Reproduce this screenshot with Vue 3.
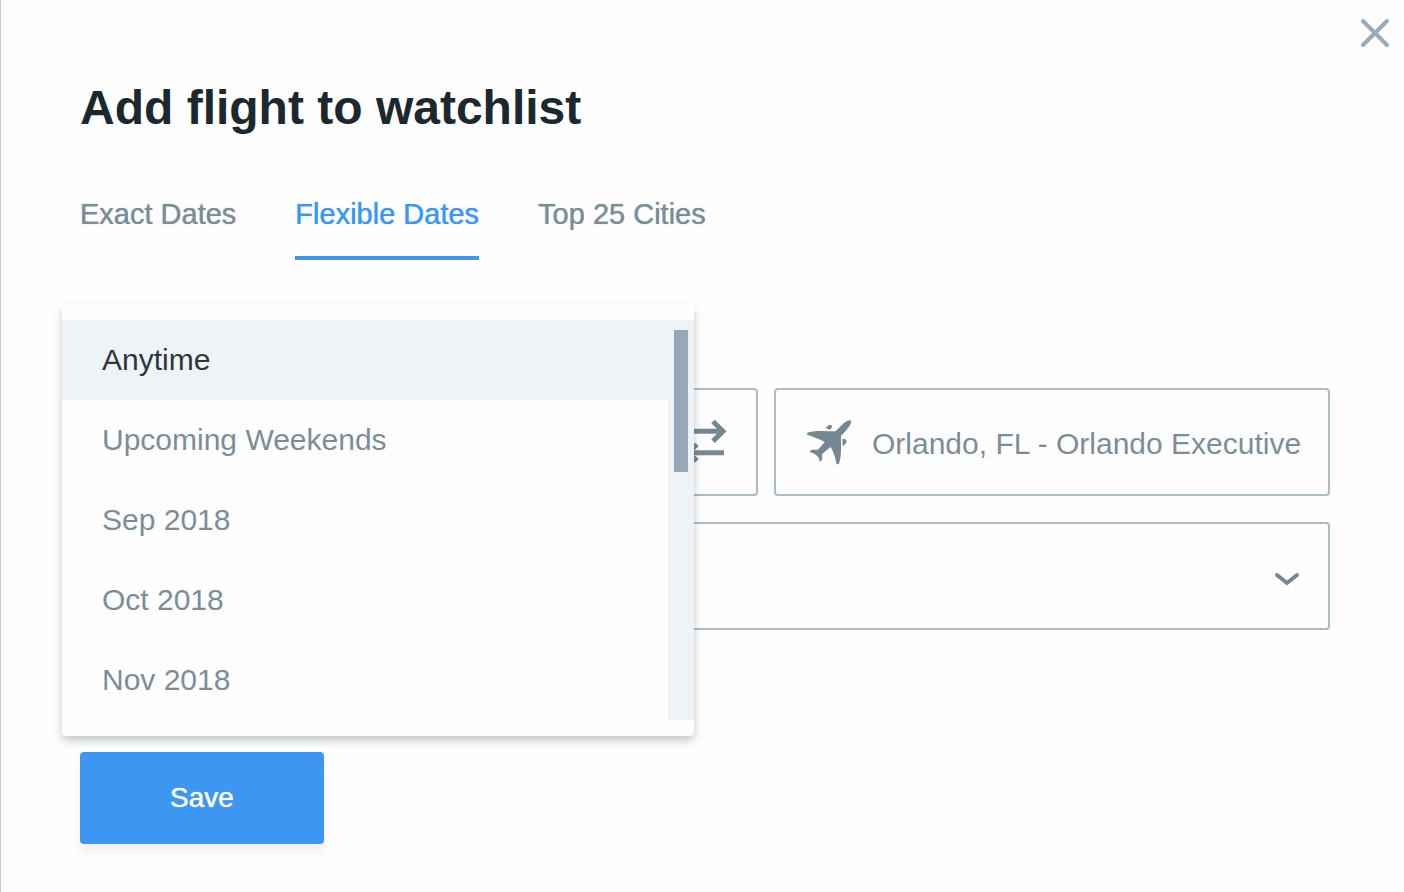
<script setup>
import { ref } from 'vue'

const tabs = ['Exact Dates', 'Flexible Dates', 'Top 25 Cities']
const activeTab = ref('Flexible Dates')

const periods = ['Anytime', 'Upcoming Weekends', 'Sep 2018', 'Oct 2018', 'Nov 2018']
const period = ref('Anytime')

const origin = ref('')
const destination = ref('Orlando, FL - Orlando Executive')

function swap() {
  const previous = origin.value
  origin.value = destination.value
  destination.value = previous
}
</script>

<template>
  <main class="dialog" role="dialog" aria-labelledby="dialog-title">
    <button class="close" type="button" aria-label="Close">
      <svg viewBox="0 0 30 30" aria-hidden="true"><path d="M3 3 27 27M27 3 3 27" /></svg>
    </button>

    <h1 id="dialog-title" class="title">Add flight to watchlist</h1>

    <nav class="tabs" role="tablist">
      <button
        v-for="tab in tabs"
        :key="tab"
        type="button"
        role="tab"
        class="tab"
        :class="{ active: tab === activeTab }"
        :aria-selected="tab === activeTab"
        @click="activeTab = tab"
      >{{ tab }}</button>
    </nav>

    <form class="form" @submit.prevent>
      <div class="route">
        <label class="field">
          <input v-model="origin" type="text" aria-label="From" />
        </label>
        <button class="swap" type="button" aria-label="Swap cities" @click="swap">
          <svg viewBox="0 0 46 48" aria-hidden="true">
            <path d="M3 13.3H40M5 34.7H42" />
            <path d="M31 3.5 41 13.3 31 23.1M15 26.5 6 34.7 15 42.9" />
          </svg>
        </button>
        <label class="field">
          <svg class="plane" viewBox="496 385 138 138" aria-hidden="true">
            <path d="M630 389Q633 391 630 399C626 409 614 422 601 435L601 480C601 497 598 510 594 520Q590 523 587 518C585 503 580 486 570 469Q556 479 544 491L545 502Q544 512 538 513Q535 500 529 495Q520 487 507 484Q508 477 516 477L531 477Q542 467 552 454C538 444 520 440 500 432Q496 427 504 425C525 419 555 421 585 422C600 406 610 396 618 392Q626 387 630 389Z" />
            <path d="M555 412Q560 403 569 402Q576 404 573 412L567 417ZM605 446L611 444Q618 446 618 452Q616 461 606 467Z" />
          </svg>
          <input v-model="destination" type="text" aria-label="To" />
        </label>
      </div>

      <div class="period">
        <select v-model="period" aria-label="Travel period">
          <option v-for="p in periods" :key="p" :value="p">{{ p }}</option>
        </select>
        <svg class="chevron" viewBox="0 0 26 16" aria-hidden="true"><path d="M3 4 13 12 23 4" /></svg>
      </div>

      <div class="menu">
        <div class="options" role="listbox" aria-label="Travel period">
          <button
            v-for="p in periods"
            :key="p"
            type="button"
            role="option"
            class="option"
            :class="{ selected: p === period }"
            :aria-selected="p === period"
            @click="period = p"
          >{{ p }}</button>
        </div>
        <div class="track"><div class="thumb"></div></div>
      </div>

      <button class="save" type="submit">Save</button>
    </form>
  </main>
</template>

<style>
body {
  margin: 0;
  background: #fefefe;
}
</style>

<style scoped>
.dialog {
  position: relative;
  box-sizing: border-box;
  min-height: 100vh;
  padding: 78px 74px 48px 79px;
  border-left: 1px solid #c8c8c8;
  background: #fefefe;
  color: #7b8d99;
  font-family: "Liberation Sans", Arial, sans-serif;
  font-size: 30px;
}
button,
input,
select {
  box-sizing: border-box;
  margin: 0;
  padding: 0;
  border: 0;
  background: transparent;
  color: inherit;
  font: inherit;
}
button {
  cursor: pointer;
}
svg {
  display: block;
  fill: none;
  stroke: #748894;
  stroke-width: 5;
}
.close {
  position: absolute;
  top: 18px;
  right: 14px;
}
.close svg {
  width: 30px;
  height: 30px;
  stroke: #97abba;
  stroke-width: 4;
  stroke-linecap: round;
}
.title {
  margin: 0;
  color: #1b2830;
  font-size: 48px;
  font-weight: 700;
  line-height: 60px;
}
.tabs {
  display: flex;
  gap: 59px;
  margin-top: 58px;
}
.tab {
  height: 64px;
  padding-bottom: 24px;
  border-bottom: 4px solid transparent;
  font-size: 29px;
  line-height: 36px;
  text-shadow: 0 0 1px currentColor;
}
.tab.active {
  border-color: #3d96f1;
  color: #3d96f1;
}
.form {
  position: relative;
  display: flex;
  flex-direction: column;
  align-items: stretch;
  margin-top: 128px;
}
.route {
  display: grid;
  grid-template-columns: 1fr 106px 1fr;
  gap: 16px;
}
.field,
.swap,
.period {
  display: flex;
  align-items: center;
  box-sizing: border-box;
  min-width: 0;
  height: 108px;
  border: 2px solid #abbdc9;
  border-radius: 4px;
}
.field {
  gap: 20px;
  padding: 0 16px 0 30px;
}
.field input {
  flex: 1;
  min-width: 0;
  height: 100%;
  padding-top: 4px;
  outline: 0;
}
.plane {
  flex: none;
  width: 46px;
  height: 46px;
  fill: #748894;
  stroke: none;
}
.swap {
  justify-content: center;
}
.swap svg {
  width: 46px;
  height: 48px;
}
.period {
  position: relative;
  margin-top: 26px;
}
.period select {
  width: 100%;
  height: 100%;
  padding: 0 80px 0 30px;
  appearance: none;
  outline: 0;
}
.chevron {
  position: absolute;
  top: 47px;
  right: 28px;
  width: 26px;
  height: 16px;
  stroke-width: 4;
  stroke-linecap: round;
  pointer-events: none;
}
.menu {
  position: absolute;
  top: -84px;
  left: -18px;
  display: flex;
  box-sizing: border-box;
  width: 632px;
  padding: 16px 0;
  border-radius: 4px;
  background: #fefefe;
  box-shadow: 0 5px 8px rgba(40, 50, 65, 0.26);
}
.options {
  display: flex;
  flex: 1;
  flex-direction: column;
}
.option {
  height: 80px;
  padding: 0 40px;
  text-align: left;
}
.option.selected {
  background: #eff3f6;
  color: #2b3740;
}
.track {
  box-sizing: border-box;
  width: 26px;
  padding: 10px 6px;
  background: #eff3f6;
}
.thumb {
  height: 142px;
  background: #97a9b8;
}
.save {
  align-self: flex-start;
  width: 244px;
  height: 92px;
  margin-top: 122px;
  border-radius: 4px;
  background: #3d96f1;
  box-shadow: 0 8px 12px rgba(0, 0, 0, 0.06);
  color: #fff;
  font-size: 28px;
  text-shadow: 0 0 1px currentColor;
}
</style>
